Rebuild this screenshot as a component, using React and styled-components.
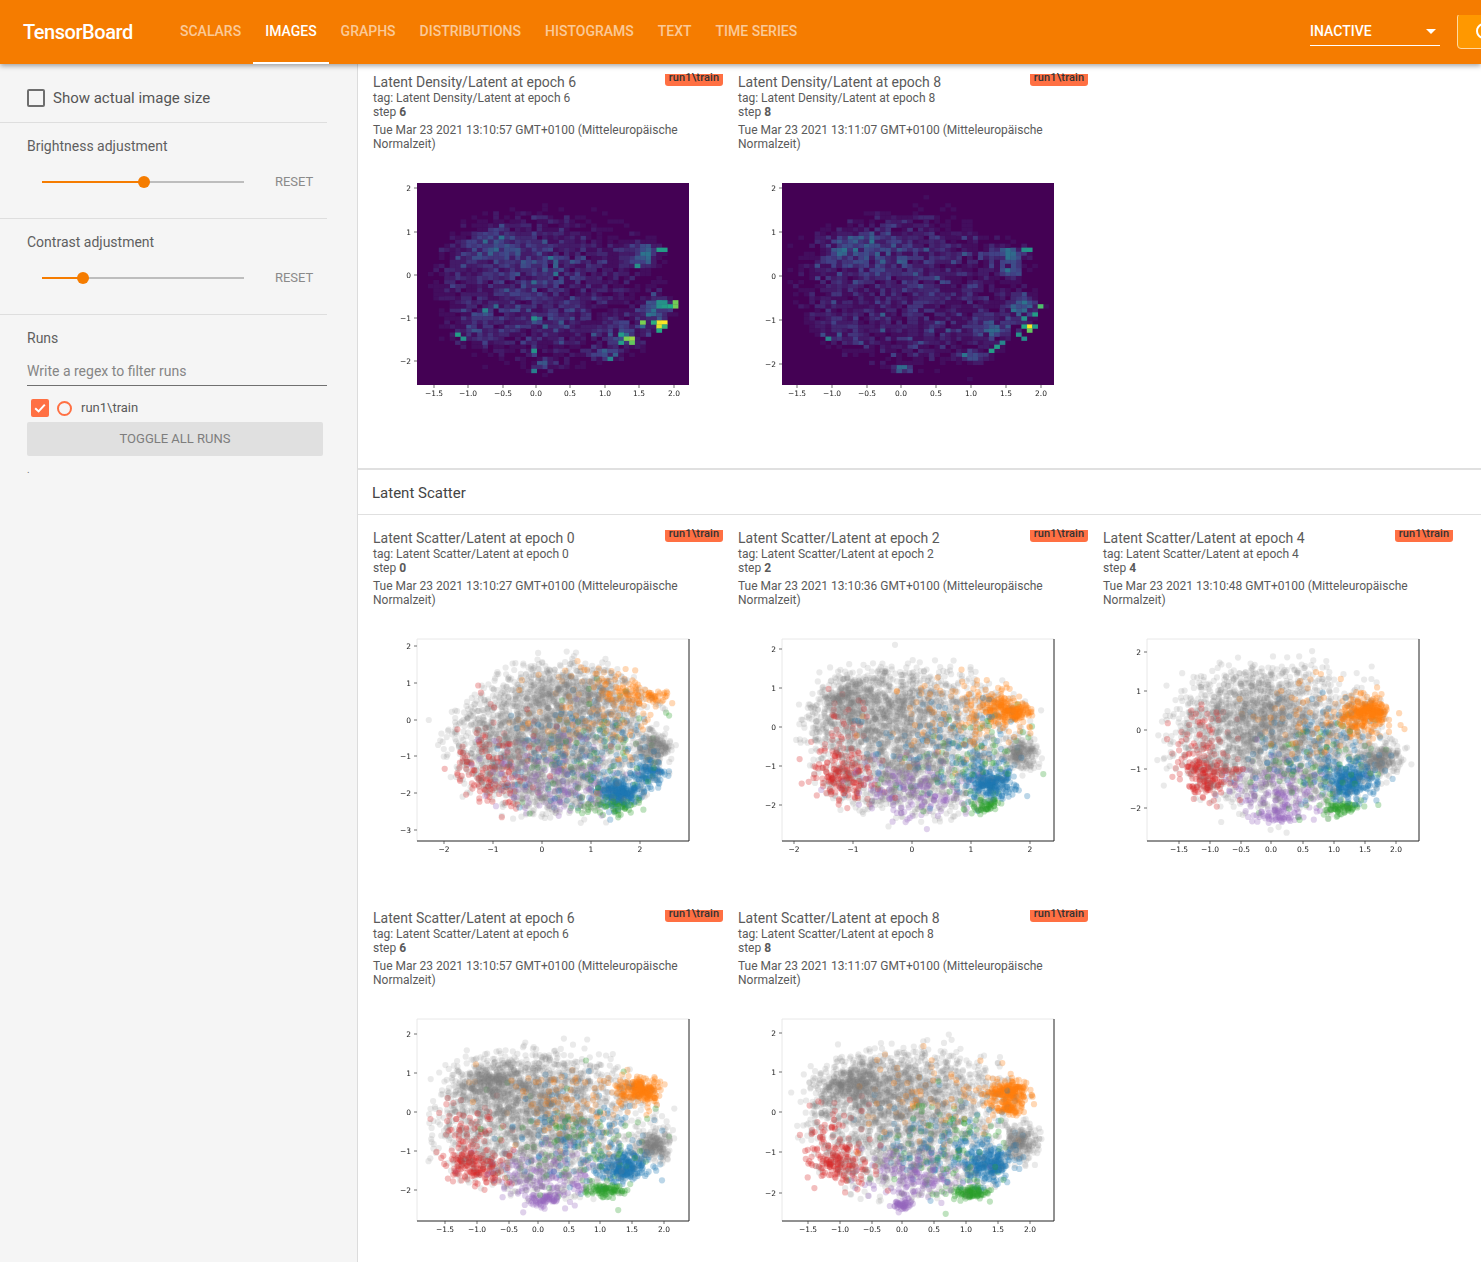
import React from "react";
import styled, { createGlobalStyle } from "styled-components";
import { MdRefresh } from "react-icons/md";

const GlobalStyle = createGlobalStyle`
  html, body {
    margin: 0;
    height: 100%;
    overflow: hidden;
    background: #fff;
    font-family: Roboto, "Liberation Sans", sans-serif;
  }
  * { box-sizing: border-box; }
`;

const Page = styled.div`
  width: 1481px;
  height: 1262px;
  display: flex;
  flex-direction: column;
  overflow: hidden;
`;

const Toolbar = styled.header`
  height: 64px;
  flex: none;
  display: flex;
  align-items: center;
  background: #f57c00;
  box-shadow: 0 2px 5px rgba(0, 0, 0, 0.35);
  position: relative;
  z-index: 2;
  padding-left: 23px;
`;

const Brand = styled.div`
  width: 145px;
  flex: none;
  color: #fff;
  font-size: 20px;
  font-weight: 500;
  letter-spacing: -0.45px;
`;

const Tabs = styled.nav`
  flex: 1;
  display: flex;
  height: 64px;
`;

const Tab = styled.div`
  height: 64px;
  padding: 0 12px;
  display: flex;
  align-items: center;
  color: ${(p) => (p.$active ? "#fff" : "rgba(255, 255, 255, 0.6)")};
  font-size: 14px;
  font-weight: 500;
  border-bottom: 2px solid ${(p) => (p.$active ? "#fff" : "transparent")};
`;

const ToolbarRight = styled.div`
  width: 171px;
  flex: none;
  display: flex;
  align-items: center;
  overflow: hidden;
`;

const RunSelect = styled.div`
  width: 130px;
  height: 28px;
  flex: none;
  margin-top: -1px;
  display: flex;
  align-items: center;
  justify-content: space-between;
  padding-right: 4px;
  color: #fff;
  font-size: 14px;
  font-weight: 500;
  border-bottom: 1px solid #fff;
`;

const Caret = styled.span`
  width: 0;
  height: 0;
  border-left: 5px solid transparent;
  border-right: 5px solid transparent;
  border-top: 5px solid #fff;
`;

const ReloadButton = styled.div`
  width: 60px;
  height: 36px;
  flex: none;
  margin: -2px 0 0 17px;
  display: flex;
  align-items: center;
  padding-left: 14px;
  color: #fff;
  background: #ff9800;
  border: 1px solid #ffd9a0;
  border-radius: 4px;
`;

const Body = styled.div`
  flex: 1;
  display: flex;
  min-height: 0;
`;

const Sidebar = styled.aside`
  width: 358px;
  flex: none;
  background: #f5f5f5;
  border-right: 1px solid #dcdcdc;
  color: #555;
`;

const SideBlock = styled.section`
  width: 327px;
  height: ${(p) => p.$height}px;
  padding-left: 27px;
  border-bottom: ${(p) => (p.$last ? "none" : "1px solid #dedede")};
`;

const ActualSizeRow = styled.label`
  display: flex;
  align-items: center;
  gap: 8px;
  padding-top: 25px;
  font-size: 15px;
`;

const Box = styled.span`
  width: 18px;
  height: 18px;
  flex: none;
  border: 2px solid #6e6e6e;
  border-radius: 2px;
`;

const BlockTitle = styled.div`
  padding-top: ${(p) => p.$top}px;
  font-size: 14px;
  line-height: 16px;
  color: #5f5f5f;
`;

const SliderRow = styled.div`
  display: flex;
  align-items: center;
  margin-top: 21px;
  padding-left: 15px;
  height: 14px;
`;

const Slider = styled.div`
  width: 202px;
  display: flex;
  align-items: center;
`;

const SliderFill = styled.span`
  height: 2px;
  width: ${(p) => p.$value}%;
  background: #f57c00;
`;

const SliderKnob = styled.span`
  width: 12px;
  height: 12px;
  flex: none;
  margin: 0 -6px;
  border-radius: 50%;
  background: #f57c00;
  position: relative;
`;

const SliderRest = styled.span`
  height: 2px;
  flex: 1;
  background: #bdbdbd;
`;

const ResetLabel = styled.span`
  margin: -2px 0 0 31px;
  color: #8a8a8a;
  font-size: 13px;
  letter-spacing: -0.05px;
`;

const RegexField = styled.div`
  width: 300px;
  height: 27px;
  margin-top: 13px;
  padding-top: 4px;
  color: #858585;
  font-size: 14px;
  line-height: 16px;
  border-bottom: 1px solid #707070;
`;

const RunRow = styled.div`
  display: flex;
  align-items: center;
  height: 18px;
  margin-top: 13px;
  padding-left: 4px;
  font-size: 13px;
  color: #5a5a5a;
`;

const RunName = styled.span`
  margin-top: -2px;
`;

const RunCheck = styled.span`
  width: 18px;
  height: 18px;
  flex: none;
  display: flex;
  align-items: center;
  justify-content: center;
  background: #ff7043;
  border-radius: 2px;
`;

const RunDot = styled.span`
  width: 15px;
  height: 15px;
  flex: none;
  margin: 1px 9px 0 8px;
  border: 2px solid #ff7043;
  border-radius: 50%;
`;

const ToggleButton = styled.div`
  width: 296px;
  height: 34px;
  margin-top: 5px;
  padding-bottom: 2px;
  display: flex;
  align-items: center;
  justify-content: center;
  background: #e0e0e0;
  border-radius: 2px;
  color: #7d7d7d;
  font-size: 13px;
`;

const Dot = styled.div`
  margin-top: 8px;
  font-size: 10px;
  line-height: 12px;
  color: #777;
`;

const Main = styled.main`
  flex: 1;
  min-width: 0;
  background: #fff;
  padding-top: 10px;
`;

const SectionHead = styled.div`
  height: 47px;
  margin-top: 14px;
  padding: 2px 14px 0;
  display: flex;
  align-items: center;
  border-top: 2px solid #e0e0e0;
  border-bottom: 1px solid #e0e0e0;
  color: #444;
  font-size: 15px;
`;

const CardGrid = styled.div`
  display: flex;
  flex-wrap: wrap;
  gap: 0 15px;
  padding: ${(p) => p.$top || 0}px 0 0 15px;
`;

const Card = styled.article`
  width: 350px;
  height: 380px;
  position: relative;
  color: #5a5a5a;
`;

const Badge = styled.span`
  position: absolute;
  top: 0;
  right: 0;
  width: 58px;
  height: 12px;
  text-align: center;
  background: #ff7043;
  border-radius: 0 0 3px 3px;
  color: #333;
  font-size: 11px;
  font-weight: 500;
  letter-spacing: 0.15px;
  line-height: 8px;
`;

const CardTitle = styled.div`
  height: 17px;
  font-size: 14px;
  line-height: 16px;
`;

const CardMeta = styled.div`
  font-size: 12px;
  line-height: 14px;
  margin-top: ${(p) => p.$top || 0}px;
  b { font-weight: 700; }
`;

const Plot = styled.svg`
  display: block;
  width: 350px;
  height: 260px;
  margin-top: 9px;
  filter: blur(0.4px);
`;

// --- fake data for the plots, seeded so that every run draws the same ---

const mulberry = (seed) => () => {
  seed |= 0;
  seed = (seed + 0x6d2b79f5) | 0;
  let t = Math.imul(seed ^ (seed >>> 15), 1 | seed);
  t = (t + Math.imul(t ^ (t >>> 7), 61 | t)) ^ t;
  return ((t ^ (t >>> 14)) >>> 0) / 4294967296;
};

const gauss = (rnd) =>
  Math.sqrt(-2 * Math.log(rnd() + 1e-9)) * Math.cos(2 * Math.PI * rnd());

const COLORS = {
  g: "#7f7f7f",
  b: "#1f77b4",
  o: "#ff7f0e",
  n: "#2ca02c",
  r: "#d62728",
  p: "#9467bd",
};

// a cloud: an outline ellipse (cx, cy, rx, ry, tilt) and its groups,
// [colour, count, centre x, centre y, spread x, spread y] in fractions of the axes
const CLOUD_0 = {
  hull: [0.52, 0.5, 0.45, 0.39, -0.25],
  groups: [
    ["g", 1700, 0.5, 0.42, 0.17, 0.16],
    ["g", 800, 0.35, 0.62, 0.17, 0.17],
    ["g", 600, 0.6, 0.22, 0.14, 0.11],
    ["g", 250, 0.88, 0.54, 0.04, 0.04],
    ["g", 400, 0.58, 0.76, 0.16, 0.1],
    ["o", 220, 0.8, 0.22, 0.07, 0.07],
    ["o", 140, 0.9, 0.29, 0.025, 0.016],
    ["o", 110, 0.68, 0.4, 0.14, 0.11],
    ["b", 280, 0.75, 0.76, 0.045, 0.035],
    ["b", 130, 0.86, 0.66, 0.035, 0.04],
    ["b", 180, 0.62, 0.58, 0.14, 0.14],
    ["n", 130, 0.74, 0.83, 0.05, 0.022],
    ["n", 110, 0.66, 0.6, 0.16, 0.17],
    ["r", 170, 0.21, 0.7, 0.08, 0.09],
    ["r", 110, 0.28, 0.62, 0.12, 0.16],
    ["p", 220, 0.5, 0.7, 0.13, 0.11],
  ],
};

const CLOUD_2 = {
  hull: [0.5, 0.5, 0.45, 0.42, -0.08],
  groups: [
    ["g", 1600, 0.42, 0.36, 0.18, 0.14],
    ["g", 1100, 0.46, 0.66, 0.2, 0.13],
    ["g", 400, 0.22, 0.3, 0.07, 0.08],
    ["g", 280, 0.88, 0.57, 0.04, 0.04],
    ["o", 190, 0.8, 0.33, 0.06, 0.06],
    ["o", 130, 0.87, 0.36, 0.025, 0.02],
    ["o", 90, 0.62, 0.4, 0.14, 0.1],
    ["b", 280, 0.78, 0.72, 0.05, 0.045],
    ["b", 140, 0.62, 0.55, 0.14, 0.12],
    ["n", 130, 0.76, 0.83, 0.03, 0.018],
    ["n", 110, 0.7, 0.65, 0.14, 0.14],
    ["r", 200, 0.22, 0.7, 0.07, 0.07],
    ["r", 70, 0.2, 0.5, 0.06, 0.12],
    ["p", 220, 0.48, 0.76, 0.12, 0.09],
  ],
};

const CLOUD_4 = {
  hull: [0.5, 0.5, 0.46, 0.42, -0.05],
  groups: [
    ["g", 1600, 0.4, 0.36, 0.19, 0.13],
    ["g", 1100, 0.46, 0.62, 0.2, 0.14],
    ["g", 280, 0.87, 0.6, 0.04, 0.04],
    ["o", 190, 0.8, 0.38, 0.055, 0.055],
    ["o", 130, 0.83, 0.35, 0.035, 0.025],
    ["o", 90, 0.62, 0.4, 0.14, 0.1],
    ["b", 280, 0.75, 0.71, 0.055, 0.05],
    ["b", 140, 0.62, 0.55, 0.14, 0.12],
    ["n", 130, 0.72, 0.84, 0.035, 0.018],
    ["n", 100, 0.65, 0.65, 0.14, 0.14],
    ["r", 190, 0.2, 0.69, 0.06, 0.06],
    ["r", 70, 0.2, 0.5, 0.06, 0.1],
    ["p", 200, 0.47, 0.78, 0.11, 0.09],
    ["p", 70, 0.47, 0.88, 0.03, 0.02],
  ],
};

const CLOUD_6 = {
  hull: [0.5, 0.52, 0.46, 0.42, 0],
  groups: [
    ["g", 1500, 0.38, 0.36, 0.2, 0.12],
    ["g", 1200, 0.44, 0.62, 0.22, 0.14],
    ["g", 280, 0.88, 0.63, 0.035, 0.04],
    ["g", 280, 0.25, 0.3, 0.07, 0.05],
    ["o", 140, 0.82, 0.36, 0.05, 0.045],
    ["o", 130, 0.84, 0.34, 0.03, 0.025],
    ["o", 100, 0.56, 0.4, 0.14, 0.1],
    ["b", 250, 0.77, 0.74, 0.05, 0.045],
    ["b", 150, 0.6, 0.6, 0.13, 0.12],
    ["n", 140, 0.7, 0.85, 0.035, 0.016],
    ["n", 110, 0.6, 0.6, 0.15, 0.15],
    ["r", 210, 0.2, 0.73, 0.07, 0.05],
    ["r", 80, 0.2, 0.58, 0.07, 0.1],
    ["p", 190, 0.47, 0.78, 0.11, 0.08],
    ["p", 90, 0.47, 0.9, 0.025, 0.015],
  ],
};

const CLOUD_8 = {
  hull: [0.5, 0.52, 0.46, 0.42, 0],
  groups: [
    ["g", 1500, 0.38, 0.34, 0.2, 0.11],
    ["g", 1200, 0.44, 0.62, 0.22, 0.15],
    ["g", 300, 0.89, 0.62, 0.035, 0.04],
    ["g", 300, 0.24, 0.32, 0.06, 0.045],
    ["o", 140, 0.83, 0.37, 0.05, 0.035],
    ["o", 120, 0.85, 0.35, 0.03, 0.022],
    ["o", 70, 0.84, 0.44, 0.02, 0.02],
    ["o", 90, 0.56, 0.38, 0.14, 0.1],
    ["b", 260, 0.77, 0.72, 0.05, 0.05],
    ["b", 150, 0.6, 0.6, 0.13, 0.12],
    ["n", 160, 0.7, 0.86, 0.035, 0.015],
    ["n", 110, 0.62, 0.64, 0.13, 0.12],
    ["r", 210, 0.18, 0.73, 0.07, 0.05],
    ["r", 80, 0.18, 0.58, 0.06, 0.1],
    ["p", 180, 0.48, 0.78, 0.1, 0.08],
    ["p", 90, 0.44, 0.92, 0.02, 0.013],
  ],
};

const AXIS_W = 272;
const AXIS_H = 202;

// fully inside the ellipse is always kept, just outside it only now and then
const keepInHull = ([cx, cy, rx, ry, tilt], x, y, rnd) => {
  const dx = x - cx;
  const dy = y - cy;
  const u = dx * Math.cos(tilt) - dy * Math.sin(tilt);
  const v = dx * Math.sin(tilt) + dy * Math.cos(tilt);
  const r = (u * u) / (rx * rx) + (v * v) / (ry * ry);
  if (r < 0.75) return true;
  if (r < 1) return rnd() < 0.55;
  return r < 1.3 && rnd() < 0.1 && x > 0.02 && x < 0.98 && y > 0.02 && y < 0.98;
};

const makePoints = (cloud, seed, scale = 1) => {
  const rnd = mulberry(seed);
  const points = [];
  cloud.groups.forEach(([c, n, cx, cy, sx, sy]) => {
    for (let i = 0; i < n * scale; i++) {
      const x = cx + gauss(rnd) * sx;
      const y = cy + gauss(rnd) * sy;
      if (keepInHull(cloud.hull, x, y, rnd)) {
        points.push({ c, x: x * AXIS_W, y: y * AXIS_H });
      }
    }
  });
  // mix the classes so grey sits over the colours in the middle, as in the plot
  for (let i = points.length - 1; i > 0; i--) {
    const j = Math.floor(rnd() * (i + 1));
    [points[i], points[j]] = [points[j], points[i]];
  }
  return points;
};

const VIRIDIS = [
  [68, 1, 84],
  [65, 68, 135],
  [42, 120, 142],
  [34, 168, 132],
  [122, 209, 81],
  [253, 231, 37],
];

const viridis = (v) => {
  const t = Math.min(0.999, Math.max(0, v)) * (VIRIDIS.length - 1);
  const i = Math.floor(t);
  const f = t - i;
  const mix = VIRIDIS[i].map((a, k) => Math.round(a + (VIRIDIS[i + 1][k] - a) * f));
  return `rgb(${mix.join(",")})`;
};

const makeCells = (cloud, seed, hot) => {
  const counts = {};
  makePoints(cloud, seed, 0.8).forEach((p) => {
    const key = `${Math.floor(p.x / (AXIS_W / 50))}-${Math.floor(p.y / (AXIS_H / 50))}`;
    counts[key] = (counts[key] || 0) + 1;
  });
  const cells = Object.entries(counts).map(([key, n]) => {
    const [col, row] = key.split("-").map(Number);
    return { col, row, v: Math.min(0.38, n / 26) };
  });
  return cells.concat(hot.map(([col, row, v]) => ({ col, row, v })));
};

const HOT_6 = [
  [44, 34, 0.98], [45, 34, 1], [44, 35, 0.95], [45, 35, 0.65], [44, 36, 0.6], [43, 34, 0.62],
  [41, 34, 0.8], [47, 29, 0.78], [47, 30, 0.78], [46, 30, 0.6], [45, 29, 0.5], [44, 29, 0.5],
  [44, 30, 0.5], [45, 30, 0.55], [38, 38, 0.8], [39, 38, 0.85], [39, 39, 0.75], [37, 37, 0.55],
  [37, 39, 0.55], [7, 37, 0.55], [8, 38, 0.5], [44, 16, 0.55], [45, 16, 0.55], [40, 20, 0.5],
  [35, 43, 0.45], [21, 41, 0.5], [21, 46, 0.42], [21, 33, 0.5], [12, 31, 0.45],
];

const HOT_8 = [
  [45, 35, 1], [45, 36, 0.75], [44, 35, 0.6], [46, 35, 0.55], [47, 30, 0.7], [46, 32, 0.55],
  [43, 37, 0.5], [44, 38, 0.48], [39, 40, 0.55], [38, 41, 0.55], [44, 16, 0.5], [45, 16, 0.52],
  [44, 33, 0.5], [40, 39, 0.45], [8, 38, 0.45],
];

const ScatterLayer = ({ cloud, seed }) => {
  const points = makePoints(cloud, seed);
  return points.map((p, i) => (
    <circle
      key={i}
      cx={p.x.toFixed(1)}
      cy={p.y.toFixed(1)}
      r="3.1"
      fill={COLORS[p.c]}
      fillOpacity={p.c === "g" ? 0.16 : 0.3}
    />
  ));
};

const HeatLayer = ({ cloud, seed, hot }) => {
  const w = AXIS_W / 50;
  const h = AXIS_H / 50;
  return (
    <>
      <rect width={AXIS_W} height={AXIS_H} fill="#440154" />
      {makeCells(cloud, seed, hot).map((c, i) => (
        <rect
          key={i}
          x={c.col * w}
          y={c.row * h}
          width={w + 0.3}
          height={h + 0.3}
          fill={viridis(c.v)}
        />
      ))}
    </>
  );
};

// ticks: [label, pixel offset from the axes' edge]
const Chart = ({ xTicks, yTicks, children, framed }) => (
  <Plot viewBox="0 0 350 260">
    <g transform="translate(44 23)">
      {children}
      {framed && (
        <>
          <line x1="0" y1="0" x2={AXIS_W} y2="0" stroke="#e8e8e8" />
          <line x1="0" y1="0" x2="0" y2={AXIS_H} stroke="#e8e8e8" />
          <line x1={AXIS_W} y1="0" x2={AXIS_W} y2={AXIS_H} stroke="#222" />
          <line x1="0" y1={AXIS_H} x2={AXIS_W} y2={AXIS_H} stroke="#222" />
        </>
      )}
      {xTicks.map(([label, x]) => (
        <g key={label}>
          <line x1={x} y1={AXIS_H} x2={x} y2={AXIS_H + 3} stroke="#333" strokeWidth="0.7" />
          <text x={x} y={AXIS_H + 11} textAnchor="middle" fontSize="7.5" fontFamily="DejaVu Sans" fill="#222">
            {label}
          </text>
        </g>
      ))}
      {yTicks.map(([label, y]) => (
        <g key={label}>
          <line x1="-3" y1={y} x2="0" y2={y} stroke="#333" strokeWidth="0.7" />
          <text x="-6" y={y + 2.6} textAnchor="end" fontSize="7.5" fontFamily="DejaVu Sans" fill="#222">
            {label}
          </text>
        </g>
      ))}
    </g>
  </Plot>
);

const xLabels = (labels, list, origin) => labels.map((l, i) => [l, list[i] - origin]);
const HALF = ["−1.5", "−1.0", "−0.5", "0.0", "0.5", "1.0", "1.5", "2.0"];
const WHOLE = ["−2", "−1", "0", "1", "2"];
const VERT = ["2", "1", "0", "−1", "−2"];
const VERT3 = ["2", "1", "0", "−1", "−2", "−3"];

const DENSITY = [
  {
    tag: "Latent Density/Latent at epoch 6",
    step: 6,
    date: "Tue Mar 23 2021 13:10:57",
    cloud: CLOUD_6,
    seed: 61,
    hot: HOT_6,
    x: xLabels(HALF, [434, 468, 503, 536, 570, 605, 639, 674], 417),
    y: xLabels(VERT, [188, 232, 275, 318, 361], 183),
  },
  {
    tag: "Latent Density/Latent at epoch 8",
    step: 8,
    date: "Tue Mar 23 2021 13:11:07",
    cloud: CLOUD_8,
    seed: 83,
    hot: HOT_8,
    x: xLabels(HALF, [797, 832, 867, 901, 936, 971, 1006, 1041], 782),
    y: xLabels(VERT, [188, 232, 276, 320, 364], 183),
  },
];

const SCATTER = [
  {
    tag: "Latent Scatter/Latent at epoch 0",
    step: 0,
    date: "Tue Mar 23 2021 13:10:27",
    cloud: CLOUD_0,
    seed: 7,
    x: xLabels(WHOLE, [444, 493, 542, 591, 640], 417),
    y: xLabels(VERT3, [646, 683, 720, 756, 793, 830], 639),
  },
  {
    tag: "Latent Scatter/Latent at epoch 2",
    step: 2,
    date: "Tue Mar 23 2021 13:10:36",
    cloud: CLOUD_2,
    seed: 21,
    x: xLabels(WHOLE, [794, 853, 912, 971, 1030], 782),
    y: xLabels(VERT, [649, 688, 727, 766, 805], 639),
  },
  {
    tag: "Latent Scatter/Latent at epoch 4",
    step: 4,
    date: "Tue Mar 23 2021 13:10:48",
    cloud: CLOUD_4,
    seed: 43,
    x: xLabels(HALF, [1179, 1210, 1241, 1271, 1303, 1334, 1365, 1396], 1147),
    y: xLabels(VERT, [652, 691, 730, 769, 808], 639),
  },
  {
    tag: "Latent Scatter/Latent at epoch 6",
    step: 6,
    date: "Tue Mar 23 2021 13:10:57",
    cloud: CLOUD_6,
    seed: 67,
    x: xLabels(HALF, [445, 477, 509, 538, 569, 600, 632, 664], 417),
    y: xLabels(VERT, [1034, 1073, 1112, 1151, 1190], 1019),
  },
  {
    tag: "Latent Scatter/Latent at epoch 8",
    step: 8,
    date: "Tue Mar 23 2021 13:11:07",
    cloud: CLOUD_8,
    seed: 89,
    x: xLabels(HALF, [808, 840, 872, 902, 934, 966, 998, 1030], 782),
    y: xLabels(VERT, [1033, 1072, 1112, 1152, 1193], 1019),
  },
];

const ImageCard = ({ item, children, framed }) => (
  <Card>
    <Badge>run1\train</Badge>
    <CardTitle>{item.tag}</CardTitle>
    <CardMeta>tag: {item.tag}</CardMeta>
    <CardMeta>
      step <b>{item.step}</b>
    </CardMeta>
    <CardMeta $top={4}>
      {item.date} GMT+0100 (Mitteleuropäische
      <br />
      Normalzeit)
    </CardMeta>
    <Chart xTicks={item.x} yTicks={item.y} framed={framed}>
      {children}
    </Chart>
  </Card>
);

const TABS = ["Scalars", "Images", "Graphs", "Distributions", "Histograms", "Text", "Time Series"];

const App = () => {
  return (
    <Page>
      <GlobalStyle />
      <Toolbar>
        <Brand>TensorBoard</Brand>
        <Tabs>
          {TABS.map((t) => (
            <Tab key={t} $active={t === "Images"}>
              {t.toUpperCase()}
            </Tab>
          ))}
        </Tabs>
        <ToolbarRight>
          <RunSelect>
            INACTIVE
            <Caret />
          </RunSelect>
          <ReloadButton>
            <MdRefresh size={24} />
          </ReloadButton>
        </ToolbarRight>
      </Toolbar>
      <Body>
        <Sidebar>
          <SideBlock $height={59}>
            <ActualSizeRow>
              <Box />
              Show actual image size
            </ActualSizeRow>
          </SideBlock>
          <SideBlock $height={96}>
            <BlockTitle $top={15}>Brightness adjustment</BlockTitle>
            <SliderRow>
              <Slider>
                <SliderFill $value={50.5} />
                <SliderKnob />
                <SliderRest />
              </Slider>
              <ResetLabel>RESET</ResetLabel>
            </SliderRow>
          </SideBlock>
          <SideBlock $height={96}>
            <BlockTitle $top={15}>Contrast adjustment</BlockTitle>
            <SliderRow>
              <Slider>
                <SliderFill $value={20.3} />
                <SliderKnob />
                <SliderRest />
              </Slider>
              <ResetLabel>RESET</ResetLabel>
            </SliderRow>
          </SideBlock>
          <SideBlock $height={200} $last>
            <BlockTitle $top={15}>Runs</BlockTitle>
            <RegexField>Write a regex to filter runs</RegexField>
            <RunRow>
              <RunCheck>
                <svg width="14" height="14" viewBox="0 0 14 14">
                  <path d="M2.2 7.2 L5.6 10.4 L11.8 3.6" fill="none" stroke="#fff" strokeWidth="2" />
                </svg>
              </RunCheck>
              <RunDot />
              <RunName>run1\train</RunName>
            </RunRow>
            <ToggleButton>TOGGLE ALL RUNS</ToggleButton>
            <Dot>.</Dot>
          </SideBlock>
        </Sidebar>
        <Main>
          <CardGrid>
            {DENSITY.map((d) => (
              <ImageCard key={d.tag} item={d}>
                <HeatLayer cloud={d.cloud} seed={d.seed} hot={d.hot} />
              </ImageCard>
            ))}
          </CardGrid>
          <SectionHead>Latent Scatter</SectionHead>
          <CardGrid $top={15}>
            {SCATTER.map((s) => (
              <ImageCard key={s.tag} item={s} framed>
                <ScatterLayer cloud={s.cloud} seed={s.seed} />
              </ImageCard>
            ))}
          </CardGrid>
        </Main>
      </Body>
    </Page>
  );
};

export default App;
